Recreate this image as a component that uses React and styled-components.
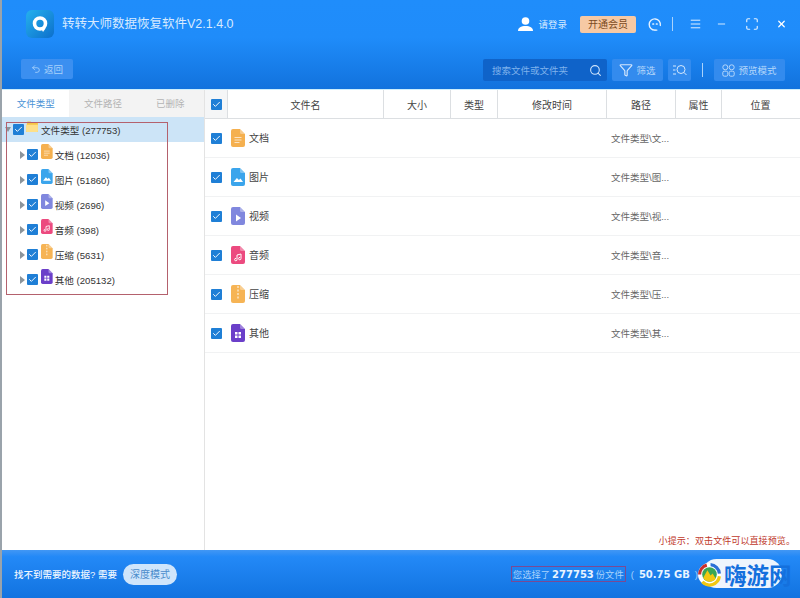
import styled, { createGlobalStyle } from "styled-components";
import { Undo2, Search, Filter, Menu, Minus, Maximize, X, Check } from "lucide-react";

const GlobalStyle = createGlobalStyle`
  html, body {
    margin: 0;
    padding: 0;
    background: #fff;
  }
  * {
    box-sizing: border-box;
  }
`;

const Page = styled.div`
  position: relative;
  width: 800px;
  height: 598px;
  overflow: hidden;
  display: flex;
  flex-direction: column;
  border-left: 2px solid #9aa3ab;
  font-family: "Liberation Sans", "Noto Sans CJK SC", sans-serif;
  font-size: 10px;
  color: #444;
`;

const Header = styled.header`
  height: 89px;
  flex: none;
  display: flex;
  flex-direction: column;
  background: linear-gradient(#1f8dfb 0%, #1f8cfa 42%, #1272dd 100%);
  color: #d7eaff;
`;

const TitleBar = styled.div`
  height: 48px;
  flex: none;
  display: flex;
  align-items: center;
  padding-left: 24px;
`;

const Logo = styled.div`
  width: 28px;
  height: 28px;
  margin-top: -1px;
  border-radius: 6px;
  display: flex;
  align-items: center;
  justify-content: center;
  background: linear-gradient(135deg, #25b1ee, #0c6fcb);
`;

const Title = styled.div`
  margin-left: 8px;
  font-size: 12.5px;
  line-height: 16px;
  white-space: nowrap;
`;

const TitleActions = styled.div`
  margin-left: auto;
  display: flex;
  align-items: center;
  height: 20px;
  padding-right: 13px;
`;

const Login = styled.div`
  display: flex;
  align-items: center;
  gap: 5px;
  margin-right: 13px;
  font-size: 9.5px;
`;

const VipButton = styled.div`
  width: 56px;
  height: 17px;
  margin-right: 12px;
  border-radius: 2px;
  background: #f6c9a4;
  color: #7a4a22;
  font-size: 10px;
  line-height: 17px;
  text-align: center;
`;

const Divider = styled.span`
  width: 1px;
  height: ${(p) => p.$h || 14}px;
  margin: 0 ${(p) => p.$right || 16}px 0 ${(p) => p.$left || 10}px;
  background: #a9d2fb;
`;

const WinIcon = styled.span`
  display: flex;
  width: ${(p) => p.$w || 14}px;
  margin-right: ${(p) => p.$gap || 0}px;
  justify-content: center;
  color: #e4f1ff;
`;

const Toolbar = styled.div`
  flex: 1;
  display: flex;
  align-items: flex-start;
  padding: 11px 15px 0 19px;
`;

const BackButton = styled.div`
  width: 52px;
  height: 20px;
  display: flex;
  align-items: center;
  justify-content: center;
  gap: 3px;
  border-radius: 2px;
  background: #3b8ff0;
  color: #a9d2fb;
  font-size: 9.5px;
`;

const ToolbarRight = styled.div`
  margin-left: auto;
  display: flex;
  align-items: center;
  height: 22px;
`;

const SearchBox = styled.div`
  width: 124px;
  height: 22px;
  display: flex;
  align-items: center;
  justify-content: space-between;
  padding: 0 5px 0 9px;
  border-radius: 2px;
  background: #0f63c9;
  color: #7fb2ec;
  font-size: 9.5px;
`;

const ToolButton = styled.div`
  width: ${(p) => p.$w}px;
  height: 22px;
  margin-left: ${(p) => p.$left || 5}px;
  display: flex;
  align-items: center;
  justify-content: center;
  gap: 3px;
  border-radius: 2px;
  background: #338bee;
  color: #b5d7fb;
  font-size: 9.5px;
`;

const Body = styled.div`
  flex: 1;
  min-height: 0;
  display: flex;
  border-top: 1px solid #cdeefd;
`;

const Sidebar = styled.aside`
  width: 203px;
  flex: none;
  border-right: 1px solid #e3e3e3;
`;

const Tabs = styled.div`
  height: 27px;
  display: flex;
`;

const Tab = styled.div`
  flex: 1;
  line-height: 27px;
  text-align: center;
  font-size: 9.5px;
  background: ${(p) => (p.$active ? "#fff" : "#f3f3f3")};
  color: ${(p) => (p.$active ? "#4b93d6" : "#b4b4b4")};
`;

const TreeRow = styled.div`
  height: 25px;
  display: flex;
  align-items: center;
  padding-left: ${(p) => (p.$root ? 3 : 18)}px;
  background: ${(p) => (p.$root ? "#cce4f7" : "transparent")};
  color: #333;
  font-size: 9.6px;
  white-space: nowrap;
`;

const Caret = styled.span`
  width: 0;
  height: 0;
  margin-right: 2px;
  ${(p) =>
    p.$open
      ? `border-left: 3px solid transparent;
         border-right: 3px solid transparent;
         border-top: 5px solid #8b949b;`
      : `border-top: 4px solid transparent;
         border-bottom: 4px solid transparent;
         border-left: 5px solid #8b949b;`}
`;

const CheckBox = styled.span`
  width: 11px;
  height: 11px;
  flex: none;
  display: flex;
  align-items: center;
  justify-content: center;
  border-radius: 1px;
  background: #1f7fd6;
  color: #fff;
`;

const TreeIcon = styled.span`
  display: flex;
  margin: -7px ${(p) => (p.$root ? "3px" : "2px")} 0 ${(p) => (p.$root ? "2px" : "3px")};
`;

const Main = styled.main`
  flex: 1;
  min-width: 0;
  display: flex;
  flex-direction: column;
`;

const TableHead = styled.div`
  height: 29px;
  flex: none;
  display: grid;
  grid-template-columns: 23px 156px 67px 47px 109px 69px 46px 78px;
  border-bottom: 1px solid #dcdfe2;
  color: #444;
`;

const HeadCell = styled.div`
  display: flex;
  align-items: center;
  justify-content: center;
  border-right: 1px solid ${(p) => (p.$last ? "transparent" : "#dcdfe2")};
  background: ${(p) => (p.$box ? "#f5f6f7" : "#fff")};
`;

const FileRow = styled.div`
  height: 39px;
  flex: none;
  display: flex;
  align-items: center;
  padding-left: 6px;
  border-bottom: 1px solid #f1f2f3;
  color: #444;
`;

const FileName = styled.div`
  width: 380px;
  display: flex;
  align-items: center;
  gap: 4px;
  margin-left: 9px;
`;

const FileLabel = styled.span`
  margin-top: -2px;
`;

const FilePath = styled.div`
  margin-top: -1px;
  color: #666;
  font-size: 9.5px;
`;

const Hint = styled.div`
  margin-top: auto;
  padding: 0 5px 2px 0;
  text-align: right;
  line-height: 14px;
  font-size: 9.1px;
  color: #c0392b;
`;

const Footer = styled.footer`
  height: 48px;
  flex: none;
  display: flex;
  align-items: center;
  padding: 0 102px 0 12px;
  background: linear-gradient(#4297f4 0%, #2389f7 14%, #1273e0 100%);
  color: #eef6ff;
  font-size: 9.5px;
  font-weight: 500;
`;

const DeepButton = styled.div`
  width: 54px;
  height: 21px;
  margin-left: 6px;
  border-radius: 11px;
  background: #cfe5fb;
  color: #4a8ccb;
  font-size: 10px;
  font-weight: 400;
  line-height: 21px;
  text-align: center;
`;

const Summary = styled.div`
  margin-left: auto;
  display: flex;
  align-items: center;
  white-space: nowrap;
  color: #a9d2fb;
  font-weight: 400;
`;

const Selected = styled.span`
  display: flex;
  align-items: center;
  gap: 2px;
  height: 16px;
  padding: 0 1px;
  border: 1px solid #7a4a94;
  font-size: 9.3px;
`;

const Strong = styled.b`
  font-family: "DejaVu Sans", "Liberation Sans", sans-serif;
  font-size: 10px;
  font-weight: 700;
  color: #e9f4ff;
`;

const SizeText = styled.span`
  display: flex;
  gap: 5px;
  margin-left: 5px;
`;

const RedBox = styled.div`
  position: absolute;
  left: 4px;
  top: 122px;
  width: 162px;
  height: 173px;
  border: 1px solid #b4616d;
  pointer-events: none;
`;

const Watermark = styled.div`
  position: absolute;
  right: 0;
  bottom: 6px;
  width: 103px;
  height: 36px;
  display: flex;
  align-items: center;
`;

const WatermarkPill = styled.div`
  position: absolute;
  left: 5px;
  top: 3px;
  width: 80px;
  height: 29px;
  border-radius: 15px;
  background: #eef5fd;
`;

const WatermarkText = styled.div`
  position: relative;
  margin-left: 27px;
  font-family: "Noto Sans CJK SC", sans-serif;
  font-size: 22.5px;
  font-weight: 700;
  line-height: 30px;
  color: #1470dd;
  white-space: nowrap;
`;

const WatermarkLogo = styled.svg`
  position: absolute;
  left: 0;
  top: 6px;
`;

const files = [
  { name: "文档", count: 12036, path: "文件类型\\文...", kind: "doc" },
  { name: "图片", count: 51860, path: "文件类型\\图...", kind: "image" },
  { name: "视频", count: 2696, path: "文件类型\\视...", kind: "video" },
  { name: "音频", count: 398, path: "文件类型\\音...", kind: "audio" },
  { name: "压缩", count: 5631, path: "文件类型\\压...", kind: "zip" },
  { name: "其他", count: 205132, path: "文件类型\\其...", kind: "other" },
];

const columns = ["文件名", "大小", "类型", "修改时间", "路径", "属性", "位置"];

const kindColors = {
  doc: "#f5b04f",
  image: "#3ba5ec",
  video: "#8087de",
  audio: "#ec4a7f",
  zip: "#f6b455",
  other: "#6b3fc9",
};

function KindGlyph({ kind }) {
  if (kind === "doc") {
    return <path d="M3.5 8.5h7M3.5 11h7M3.5 13.5h5" stroke="#fff" strokeOpacity=".65" strokeWidth="1" />;
  }
  if (kind === "image") {
    return <path d="M2.5 14l3.4-4 2 2 1.6-1.6 2.5 3.6z" fill="#fff" />;
  }
  if (kind === "video") {
    return <path d="M5 7.5l5 3.5-5 3.5z" fill="#fff" />;
  }
  if (kind === "audio") {
    return (
      <path
        d="M6 13.5V9l4-1v4.5M6 13.5a1.2 1.2 0 1 1-1-1.1M10 12.5a1.2 1.2 0 1 1-1-1.1"
        stroke="#fff"
        strokeWidth="1"
        fill="none"
      />
    );
  }
  if (kind === "zip") {
    return <path d="M7 1v2M7 4.5v2M7 8v2M7 11.5v2" stroke="#fff" strokeOpacity=".8" strokeWidth="1.2" />;
  }
  return <path d="M4 8h2.500v2.500H4zM7.500 8H10v2.500H7.500zM4 11.500h2.500V14H4zM7.500 11.500H10V14H7.500z" fill="#fff" />;
}

function FileIcon({ kind, size = 18 }) {
  return (
    <svg width={(size * 14) / 18} height={size} viewBox="0 0 14 18">
      <path
        d="M2 0h7l5 5v11a2 2 0 0 1-2 2H2a2 2 0 0 1-2-2V2a2 2 0 0 1 2-2z"
        fill={kindColors[kind]}
      />
      <path d="M9 0l5 5h-3.500A1.500 1.500 0 0 1 9 3.500z" fill="#fff" fillOpacity=".35" />
      <KindGlyph kind={kind} />
    </svg>
  );
}

function Folder() {
  return (
    <svg width="12" height="11" viewBox="0 0 13 12">
      <path d="M1 1.500A1 1 0 0 1 2 .5h3l1.500 1.500H12a1 1 0 0 1 1 1V11a1 1 0 0 1-1 1H1a1 1 0 0 1-1-1z" fill="#f6c544" />
      <path d="M0 4h13v7a1 1 0 0 1-1 1H1a1 1 0 0 1-1-1z" fill="#fde08a" />
    </svg>
  );
}

function Tick() {
  return <Check size={9} strokeWidth={2.5} />;
}

function App() {
  return (
    <Page>
      <GlobalStyle />
      <Header>
        <TitleBar>
          <Logo>
            <svg width="18" height="18" viewBox="0 0 18 18">
              <circle cx="9" cy="8.500" r="5.500" fill="none" stroke="#fff" strokeWidth="3.600" />
              <path d="M9.500 12l5 1.500-2.500 3.500z" fill="#fff" />
            </svg>
          </Logo>
          <Title>转转大师数据恢复软件V2.1.4.0</Title>
          <TitleActions>
            <Login>
              <svg width="15" height="14" viewBox="0 0 15 14">
                <circle cx="7.500" cy="4" r="3.800" fill="#fff" />
                <path d="M0 14c0-3.500 3-5 7.500-5s7.500 1.500 7.500 5z" fill="#fff" />
              </svg>
              请登录
            </Login>
            <VipButton>开通会员</VipButton>
            <WinIcon $w={14}>
              <svg width="15" height="15" viewBox="0 0 15 15" fill="none" stroke="#e4f1ff" strokeWidth="1.500">
                <path d="M13.200 8.500A6 6 0 1 0 7.500 13.500" strokeLinecap="round" />
                <path d="M7.500 13.500h2" strokeLinecap="round" />
                <path d="M5.300 7h.6M9.100 7h.6" strokeWidth="1.800" strokeLinecap="round" />
              </svg>
            </WinIcon>
            <Divider $left={10} $right={16} />
            <WinIcon $w={13} $gap={14}>
              <Menu size={18} strokeWidth={1.800} />
            </WinIcon>
            <WinIcon $w={11} $gap={18}>
              <Minus size={16} strokeWidth={2} />
            </WinIcon>
            <WinIcon $w={14} $gap={17}>
              <Maximize size={16} strokeWidth={2} />
            </WinIcon>
            <WinIcon $w={11}>
              <X size={18} strokeWidth={2.600} color="#fff" />
            </WinIcon>
          </TitleActions>
        </TitleBar>
        <Toolbar>
          <BackButton>
            <Undo2 size={10} />
            返回
          </BackButton>
          <ToolbarRight>
            <SearchBox>
              搜索文件或文件夹
              <Search size={13} color="#cfe4fb" />
            </SearchBox>
            <ToolButton $w={51} $left={5}>
              <Filter size={14} color="#d5e8fd" />
              筛选
            </ToolButton>
            <ToolButton $w={23}>
              <svg width="14" height="12" viewBox="0 0 14 12" fill="none" stroke="#d5e8fd" strokeWidth="1">
                <path d="M0 2h3M0 6h2.500M0 10h3" />
                <circle cx="8" cy="5.500" r="4" />
                <path d="M11 8.500l2.500 2.500" />
              </svg>
            </ToolButton>
            <Divider $h={14} $left={11} $right={10} />
            <ToolButton $w={71} $left={1}>
              <svg width="13" height="13" viewBox="0 0 13 13" fill="none" stroke="#b5d7fb" strokeWidth="1">
                <circle cx="3.300" cy="3.300" r="2.500" />
                <circle cx="9.700" cy="3.300" r="2.500" />
                <rect x=".8" y="7.200" width="5" height="5" rx="1.500" />
                <rect x="7.200" y="7.200" width="5" height="5" rx="1.500" />
              </svg>
              预览模式
            </ToolButton>
          </ToolbarRight>
        </Toolbar>
      </Header>

      <Body>
        <Sidebar>
          <Tabs>
            <Tab $active>文件类型</Tab>
            <Tab>文件路径</Tab>
            <Tab>已删除</Tab>
          </Tabs>
          <TreeRow $root>
            <Caret $open />
            <CheckBox>
              <Tick />
            </CheckBox>
            <TreeIcon $root>
              <Folder />
            </TreeIcon>
            文件类型 (277753)
          </TreeRow>
          {files.map((file) => (
            <TreeRow key={file.kind}>
              <Caret />
              <CheckBox>
                <Tick />
              </CheckBox>
              <TreeIcon>
                <FileIcon kind={file.kind} size={15} />
              </TreeIcon>
              {file.name} ({file.count})
            </TreeRow>
          ))}
        </Sidebar>

        <Main>
          <TableHead>
            <HeadCell $box>
              <CheckBox>
                <Tick />
              </CheckBox>
            </HeadCell>
            {columns.map((col, i) => (
              <HeadCell key={col} $last={i === columns.length - 1}>
                {col}
              </HeadCell>
            ))}
          </TableHead>
          {files.map((file) => (
            <FileRow key={file.kind}>
              <CheckBox>
                <Tick />
              </CheckBox>
              <FileName>
                <FileIcon kind={file.kind} />
                <FileLabel>{file.name}</FileLabel>
              </FileName>
              <FilePath>{file.path}</FilePath>
            </FileRow>
          ))}
          <Hint>小提示：双击文件可以直接预览。</Hint>
        </Main>
      </Body>

      <Footer>
        <span>找不到需要的数据? 需要</span>
        <DeepButton>深度模式</DeepButton>
        <Summary>
          <Selected>
            您选择了 <Strong>277753</Strong> 份文件
          </Selected>
          <SizeText>
            ( <Strong>50.75 GB</Strong> )
          </SizeText>
        </Summary>
      </Footer>

      <RedBox />

      <Watermark>
        <WatermarkPill />
        <WatermarkLogo width="25" height="25" viewBox="0 0 24 24">
          <circle cx="12" cy="12" r="11" fill="#fff" />
          <path d="M1 12A11 11 0 0 1 9 1.500l.8 3A8 8 0 0 0 4 12z" fill="#c9302c" />
          <path d="M13 1a11 11 0 0 1 10 10l-3 .3A8 8 0 0 0 13 4z" fill="#2a6fd6" />
          <path d="M23 14a11 11 0 0 1-19 6l2.300-2A8 8 0 0 0 20 13.500z" fill="#f2c811" />
          <circle cx="12" cy="12" r="7" fill="#3aa655" />
          <path d="M6 15l4-7 3 5 2-2 3 5a7 7 0 0 1-12-1z" fill="#f2c811" />
        </WatermarkLogo>
        <WatermarkText>嗨游网</WatermarkText>
      </Watermark>
    </Page>
  );
}

export default App;
